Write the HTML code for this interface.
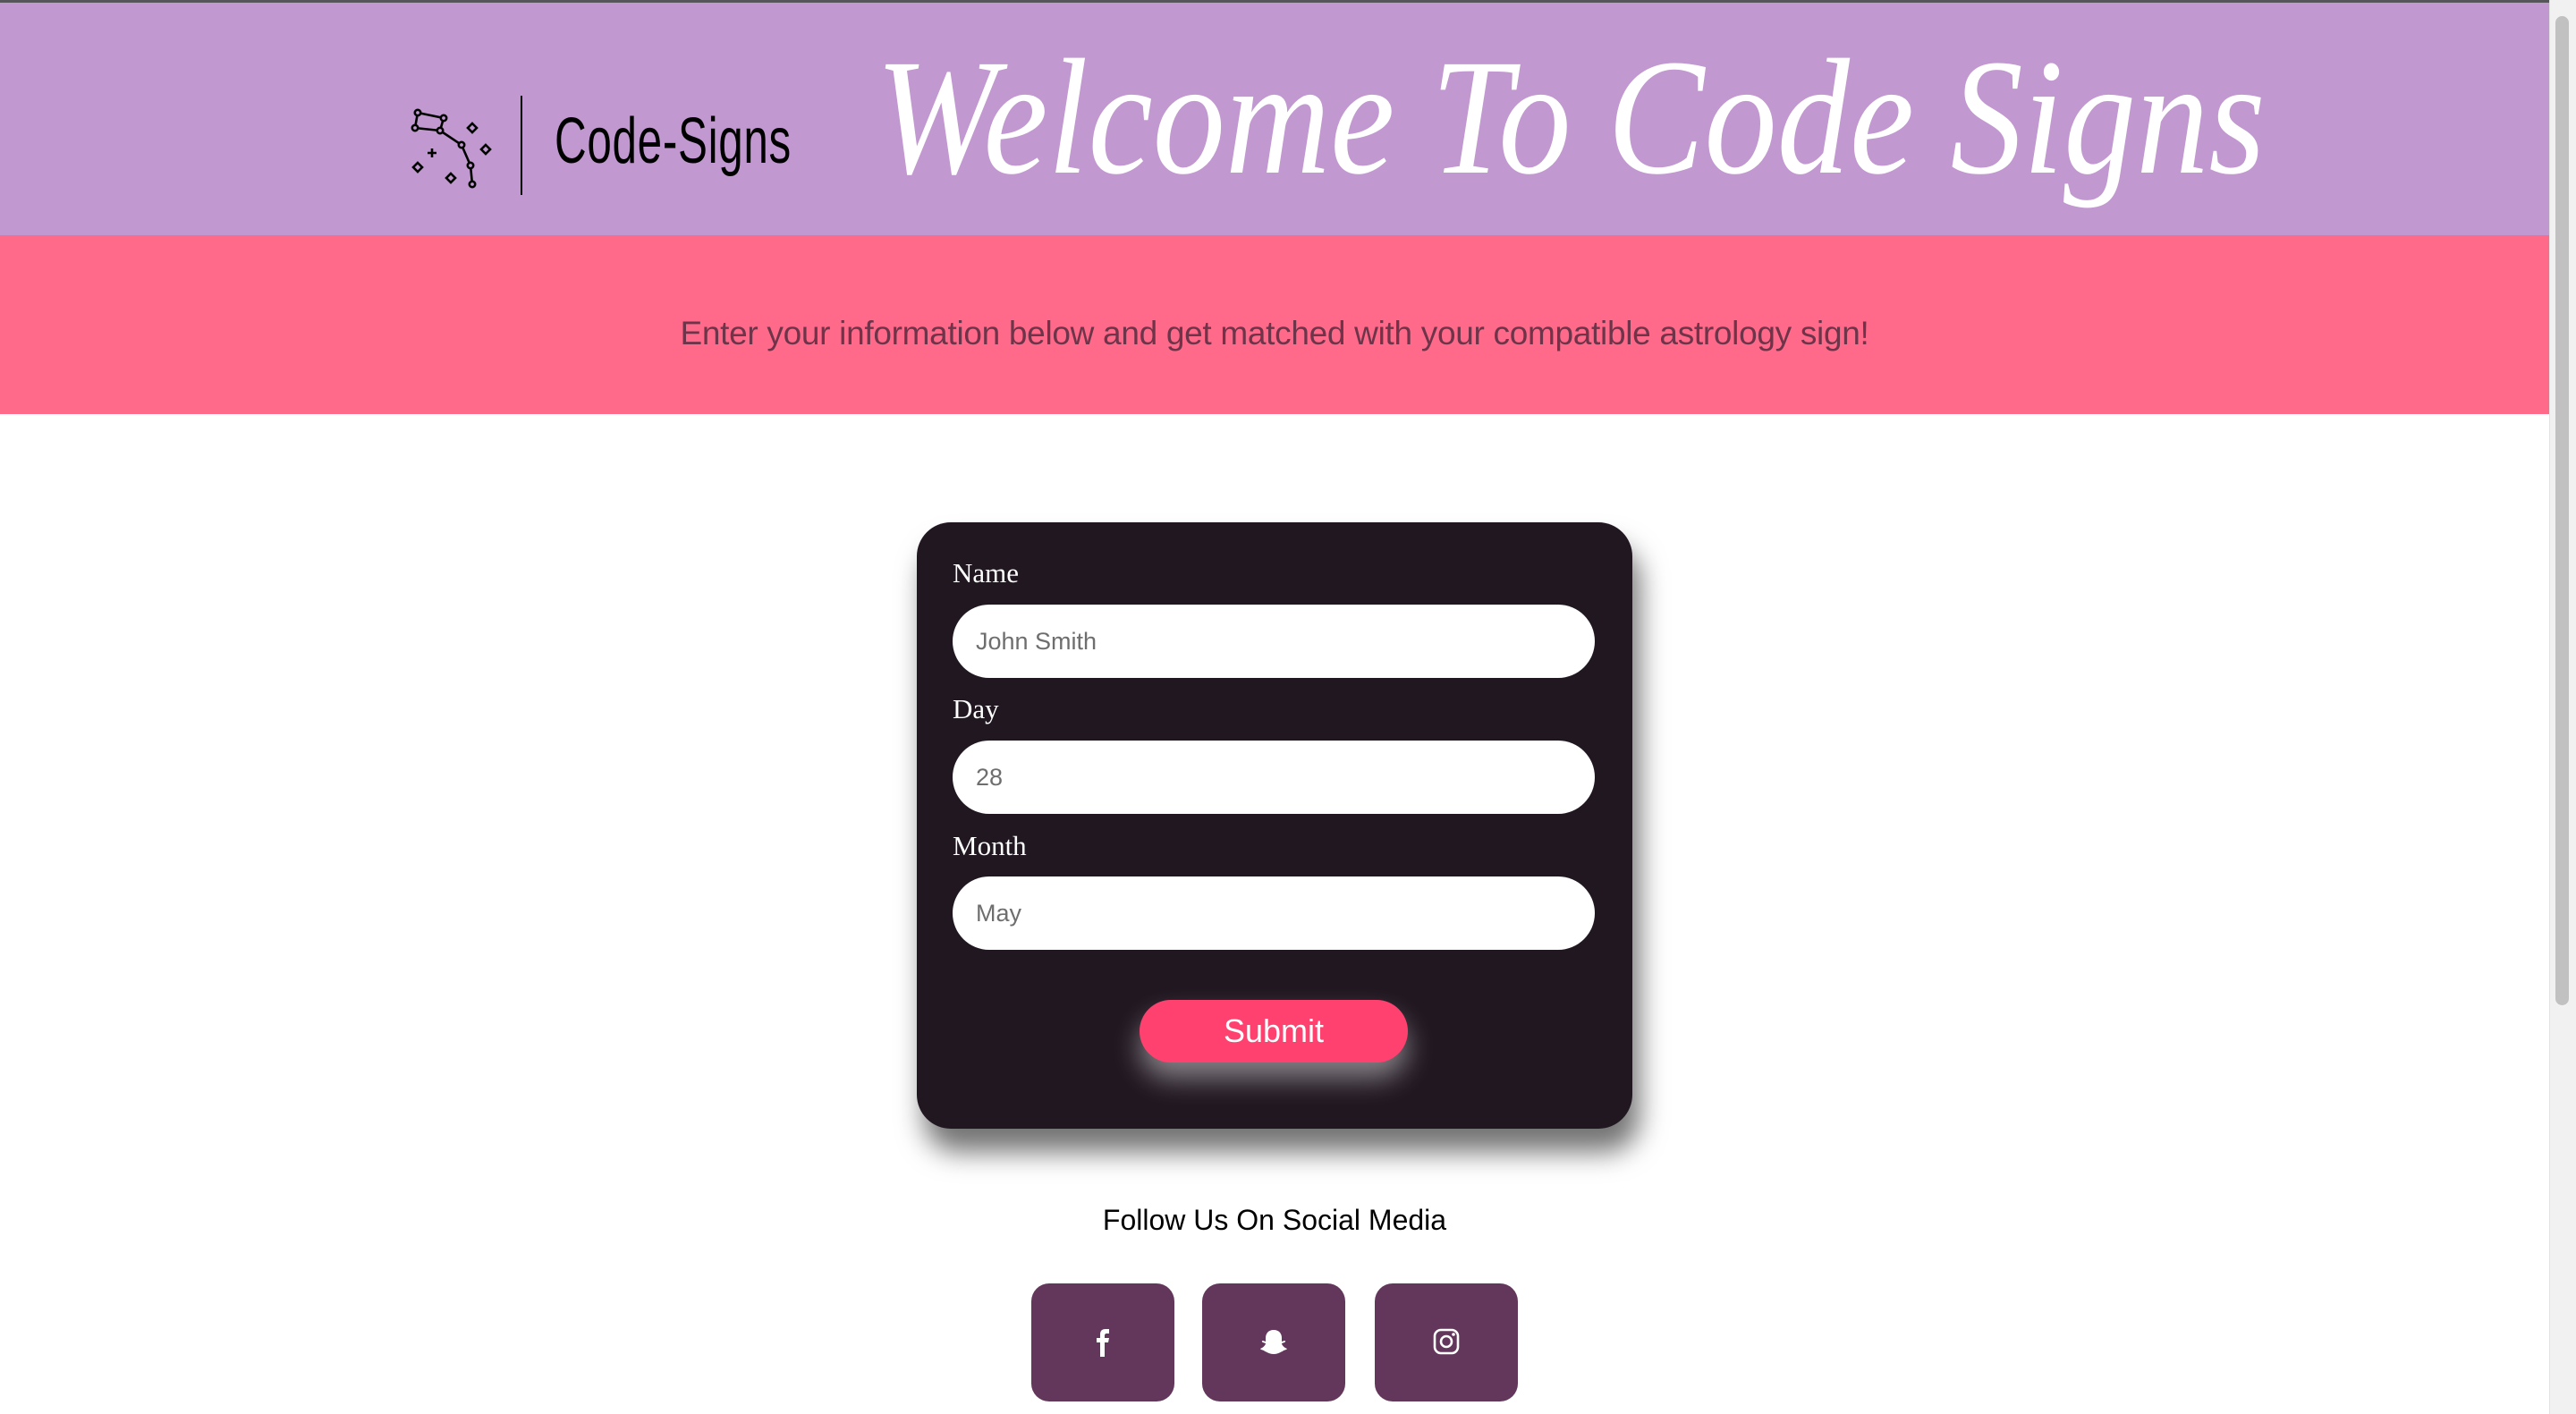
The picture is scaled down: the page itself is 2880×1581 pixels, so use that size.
<!DOCTYPE html>
<html><head><meta charset="utf-8"><style>
*{margin:0;padding:0;box-sizing:border-box}
html,body{width:2880px;height:1581px;overflow:hidden;background:#fff;font-family:"Liberation Sans",sans-serif;position:relative}
.abs{position:absolute}
#topline{left:0;top:0;width:2850px;height:3px;background:#55555a}
#hdr{left:0;top:3px;width:2850px;height:260px;background:#c198cf}
#band{left:0;top:263px;width:2850px;height:200px;background:#ff6a8a}
#sb{left:2850px;top:0;width:30px;height:1581px;background:#f1f1f1;border-left:1px solid #e2e2e2}
#thumb{left:2857px;top:18px;width:15px;height:1106px;background:#c1c1c1;border-radius:8px}
#brand{left:620px;top:108px;font-size:72px;line-height:100px;color:#000;transform:scaleX(0.686);transform-origin:left center;white-space:nowrap;letter-spacing:1px}
#title{left:979px;top:22px;font-family:"Liberation Serif",serif;font-style:italic;font-size:185px;line-height:220px;color:#fff;white-space:nowrap;transform-origin:left top}
#sub{left:0;width:2850px;top:347px;text-align:center;font-size:37px;line-height:52px;color:#6e3449;letter-spacing:-0.3px}
#card{left:1025px;top:584px;width:800px;height:678px;background:#211721;border-radius:38px;box-shadow:8px 26px 30px rgba(0,0,0,.55)}
.lbl{position:absolute;left:40px;font-family:"Liberation Serif",serif;color:#fff;font-size:31px;line-height:40px}
.inp{position:absolute;left:40px;width:718px;height:82px;background:#fff;border-radius:41px;color:#6e6e6e;font-size:27px;line-height:82px;padding-left:26px}
#btn{left:249px;top:534px;width:300px;height:70px;border-radius:35px;background:#ff4170;color:#fff;font-size:36px;line-height:70px;text-align:center;box-shadow:0 18px 30px rgba(255,255,255,.45)}
#follow{left:0;width:2850px;top:1342px;text-align:center;font-size:32px;line-height:44px;color:#000}
.soc{position:absolute;top:1435px;width:160px;height:132px;background:#63365b;border-radius:20px}
.soc svg{position:absolute;left:60px;top:50px}
</style></head><body>
<div class="abs" id="hdr"></div>
<div class="abs" id="topline"></div>
<div class="abs" id="band"></div>
<svg class="abs" style="left:0;top:0" width="900" height="240" viewBox="0 0 900 240">
<g fill="none" stroke="#000" stroke-width="2.6">
<polyline points="467,126 496,132 492,146 464,143 467,126"/>
<polyline points="492,146 516,162 526,185 528,206"/>
<circle cx="467" cy="126" r="3.2" fill="#c198cf"/><circle cx="496" cy="132" r="3.2" fill="#c198cf"/>
<circle cx="464" cy="143" r="3.2" fill="#c198cf"/><circle cx="492" cy="146" r="3.2" fill="#c198cf"/>
<circle cx="516" cy="162" r="3.2" fill="#c198cf"/><circle cx="526" cy="185" r="3.2" fill="#c198cf"/>
<circle cx="528" cy="206" r="3.2" fill="#c198cf"/>
<path d="M528 138l5 5-5 5-5-5z M543 162l5 5-5 5-5-5z M467 182l5 5-5 5-5-5z M504 194l5 5-5 5-5-5z"/>
<path d="M483 166v10M478 171h10"/>
<line x1="583" y1="107" x2="583" y2="218" stroke-width="2"/>
</g></svg>
<div class="abs" id="brand">Code-Signs</div>
<div class="abs" id="title" style="transform:scaleX(0.878)">Welcome To Code Signs</div>
<div class="abs" id="sub">Enter your information below and get matched with your compatible astrology sign!</div>
<div class="abs" id="card">
<div class="lbl" style="top:37px">Name</div>
<div class="inp" style="top:92px">John Smith</div>
<div class="lbl" style="top:189px">Day</div>
<div class="inp" style="top:244px">28</div>
<div class="lbl" style="top:342px">Month</div>
<div class="inp" style="top:396px">May</div>
<div class="abs" id="btn">Submit</div>
</div>
<div class="abs" id="follow">Follow Us On Social Media</div>
<div class="soc" style="left:1153px"><svg width="40" height="32" viewBox="0 0 40 32"><path d="M17 32V16h-4v-5h4V7c0-4 2-6 6-6h4v5h-3c-1 0-2 1-2 2v3h5l-1 5h-4v16z" fill="#fff"/></svg></div>
<div class="soc" style="left:1344px"><svg width="40" height="32" viewBox="0 0 40 32"><path d="M20 2c6 0 9 4 9 9v4l3-1c1 0 2 1 0 2l-3 1c0 2 3 5 6 6-1 2-4 1-5 3-2 0-4 3-10 3s-8-3-10-3c-1-2-4-1-5-3 3-1 6-4 6-6l-3-1c-2-1-1-2 0-2l3 1v-4c0-5 3-9 9-9z" fill="#fff"/></svg></div>
<div class="soc" style="left:1537px"><svg width="40" height="32" viewBox="0 0 40 32"><g fill="none" stroke="#fff" stroke-width="2.6"><rect x="7" y="2" width="26" height="26" rx="7"/><circle cx="20" cy="15" r="6"/></g><circle cx="28" cy="7" r="1.8" fill="#fff"/></svg></div>
<div class="abs" id="sb"></div>
<div class="abs" id="thumb"></div>
</body></html>
